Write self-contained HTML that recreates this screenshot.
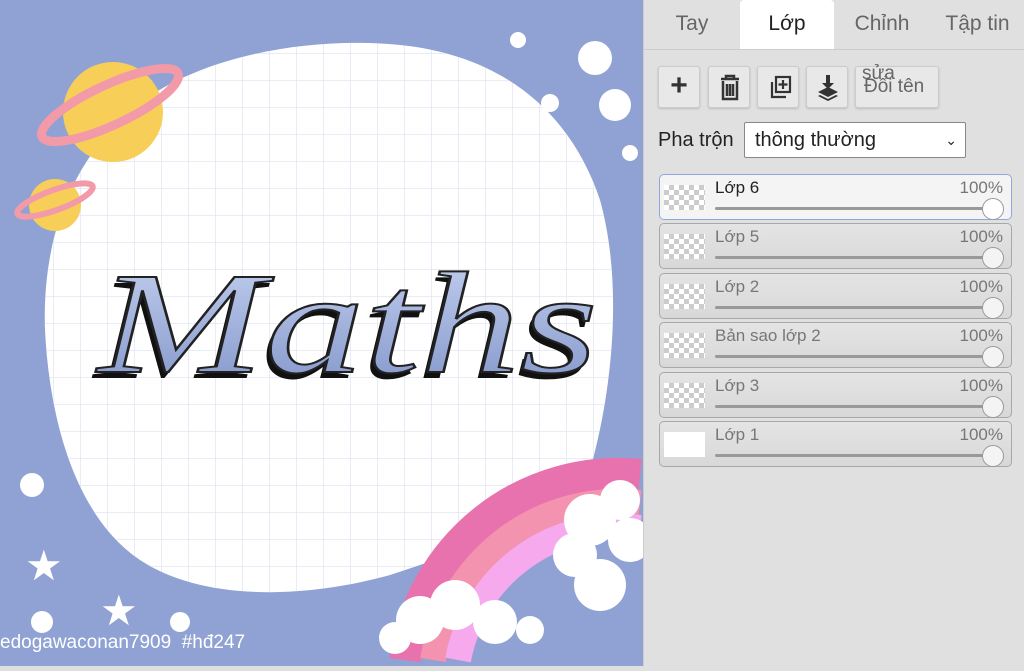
<!DOCTYPE html>
<html><head><meta charset="utf-8"><style>
*{margin:0;padding:0;box-sizing:border-box}
body{width:1024px;height:666px;overflow:hidden;background:#e0e0e0;font-family:"Liberation Sans",sans-serif;position:relative}
#cv{position:absolute;left:0;top:0;width:643px;height:666px;background:#8fa2d3}
#panel{position:absolute;left:643px;top:0;width:381px;height:666px;background:#e0e0e0;border-left:1px solid #ccc}
.tab{position:absolute;top:0;height:49px;line-height:48px;font-size:21px;color:#666;text-align:center}
.tabline{position:absolute;left:0;top:49px;width:381px;height:1px;background:#ccc}
.btn{position:absolute;top:66px;width:42px;height:42px;background:#e8e8e8;border:1px solid #ccc;border-radius:3px;box-shadow:0 1px 2px #bbb}
.layer{position:absolute;left:15px;width:353px;height:46px;border:1px solid #a8a8a8;border-radius:5px;background:linear-gradient(#e4e4e4,#d8d8d8)}
.layer .th{position:absolute;left:4px;top:10px;width:41px;height:25px;background-color:#fff;background-image:linear-gradient(45deg,#ccc 25%,transparent 25%,transparent 75%,#ccc 75%),linear-gradient(45deg,#ccc 25%,transparent 25%,transparent 75%,#ccc 75%);background-size:10px 10px;background-position:0 0,5px 5px}
.layer .nm{position:absolute;left:55px;top:3px;font-size:17px;color:#777}
.layer .pc{position:absolute;right:8px;top:3px;font-size:17px;color:#777}
.layer .tr{position:absolute;left:55px;right:18px;top:32px;height:3px;background:#999;border-radius:2px}
.layer .kn{position:absolute;right:7px;top:23px;width:22px;height:22px;border-radius:50%;background:#f4f4f4;border:1px solid #999}
</style></head><body>
<div id="cv">
<svg width="643" height="666" viewBox="0 0 643 666">
<defs>
<pattern id="g" width="27" height="27" patternUnits="userSpaceOnUse"><path d="M27 0V27H0" fill="none" stroke="#e3e6f2" stroke-width="1.5"/></pattern>
<linearGradient id="tg" x1="0" y1="0" x2="0" y2="1"><stop offset="0" stop-color="#c6d2f0"/><stop offset="1" stop-color="#7f93c8"/></linearGradient>
</defs>
<path d="M120 120 C180 60 300 35 400 45 C500 55 570 110 600 200 C625 290 610 400 590 470 C560 520 480 545 390 575 C300 600 200 600 140 560 C80 520 50 430 45 330 C42 240 70 170 120 120Z" fill="#fff"/>
<path d="M120 120 C180 60 300 35 400 45 C500 55 570 110 600 200 C625 290 610 400 590 470 C560 520 480 545 390 575 C300 600 200 600 140 560 C80 520 50 430 45 330 C42 240 70 170 120 120Z" fill="url(#g)"/>
<circle cx="113" cy="112" r="50" fill="#f7cf58"/>
<ellipse cx="110" cy="105" rx="75" ry="20" transform="rotate(-25 110 105)" fill="none" stroke="#f29aa8" stroke-width="9"/>
<circle cx="55" cy="205" r="26" fill="#f7cf58"/>
<ellipse cx="55" cy="200" rx="40" ry="10" transform="rotate(-20 55 200)" fill="none" stroke="#f29aa8" stroke-width="6"/>
<circle cx="518" cy="40" r="8" fill="#fff"/><circle cx="550" cy="103" r="9" fill="#fff"/><circle cx="630" cy="153" r="8" fill="#fff"/>
<circle cx="595" cy="58" r="17" fill="#fff"/><circle cx="615" cy="105" r="16" fill="#fff"/>
<circle cx="32" cy="485" r="12" fill="#fff"/><circle cx="42" cy="622" r="11" fill="#fff"/><circle cx="180" cy="622" r="10" fill="#fff"/>
<text x="25" y="580" font-size="42" fill="#fff">★</text><text x="100" y="625" font-size="42" fill="#fff">★</text>
<path d="M405 660 A215 215 0 0 1 640 475" fill="none" stroke="#e872ad" stroke-width="32"/>
<path d="M433 660 A188 188 0 0 1 640 503" fill="none" stroke="#f393b0" stroke-width="26"/>
<path d="M458 660 A163 163 0 0 1 640 528" fill="none" stroke="#f6a9ec" stroke-width="26"/>
<g fill="#fff"><circle cx="420" cy="620" r="24"/><circle cx="455" cy="605" r="25"/><circle cx="495" cy="622" r="22"/><circle cx="395" cy="638" r="16"/><circle cx="530" cy="630" r="14"/><circle cx="590" cy="520" r="26"/><circle cx="620" cy="500" r="20"/><circle cx="575" cy="555" r="22"/><circle cx="600" cy="585" r="26"/><circle cx="630" cy="540" r="22"/></g>
<text x="94" y="378" font-family="Liberation Serif" font-style="italic" font-size="145" fill="#111" textLength="500" lengthAdjust="spacingAndGlyphs">Maths</text>
<text x="98" y="372" font-family="Liberation Serif" font-style="italic" font-size="145" fill="url(#tg)" stroke="#222" stroke-width="2" textLength="500" lengthAdjust="spacingAndGlyphs">Maths</text>
<text x="0" y="648" font-size="19" fill="#fff">edogawaconan7909 &#160;#hđ247</text>
</svg>
</div>
<div id="panel">
<div class="tab" style="left:0;width:96px">Tay</div>
<div class="tab" style="left:96px;width:94px;background:#fff;color:#222;border-radius:4px 4px 0 0">Lớp</div>
<div class="tab" style="left:190px;width:96px">Chỉnh</div>
<div class="tab" style="left:286px;width:95px">Tập tin</div>
<div class="tabline"></div>
<div class="btn" style="left:14px;font-size:30px;line-height:38px;text-align:center;font-weight:bold;color:#333">+</div>
<div class="btn" style="left:64px"><svg width="42" height="42"><g fill="none" stroke="#333" stroke-width="2.5"><path d="M12 12H30M17 12V9H25V12M14 14V32H28V14M18 17V29M21 17V29M24 17V29"/></g></svg></div>
<div class="btn" style="left:113px"><svg width="42" height="42"><g fill="none" stroke="#333" stroke-width="2.2"><path d="M14 15V30H28"/><rect x="18" y="10" width="14" height="15"/><path d="M25 13V22M20.5 17.5H29.5"/></g></svg></div>
<div class="btn" style="left:162px"><svg width="42" height="42"><g fill="#333"><path d="M19 8H23V16H27L21 22L15 16H19Z"/><path d="M11 25L21 20L31 25L21 30Z"/><path d="M11 29L21 34L31 29L29 28L21 32L13 28Z"/></g></svg></div>
<div class="btn" style="left:211px;width:84px;font-size:19px;color:#666;text-align:center"><span style="position:absolute;left:6px;top:-4px">sửa</span><span style="position:absolute;left:8px;top:9px">Đổi tên</span></div>
<div style="position:absolute;left:14px;top:129px;font-size:20px;color:#222">Pha trộn</div>
<div style="position:absolute;left:100px;top:122px;width:222px;height:36px;background:#fff;border:1px solid #888;border-radius:2px;font-size:20px;line-height:34px;padding-left:10px;color:#222">thông thường<span style="position:absolute;right:8px;top:0;font-size:14px">&#x2304;</span></div>
<div class="layer" style="top:174px;background:#f4f4f4;border-color:#8fa8e0"><div class="th"></div><div class="nm" style="color:#222">Lớp 6</div><div class="pc">100%</div><div class="tr"></div><div class="kn" style="background:#fff"></div></div>
<div class="layer" style="top:223px"><div class="th"></div><div class="nm">Lớp 5</div><div class="pc">100%</div><div class="tr"></div><div class="kn"></div></div>
<div class="layer" style="top:273px"><div class="th"></div><div class="nm">Lớp 2</div><div class="pc">100%</div><div class="tr"></div><div class="kn"></div></div>
<div class="layer" style="top:322px"><div class="th"></div><div class="nm">Bản sao lớp 2</div><div class="pc">100%</div><div class="tr"></div><div class="kn"></div></div>
<div class="layer" style="top:372px"><div class="th"></div><div class="nm">Lớp 3</div><div class="pc">100%</div><div class="tr"></div><div class="kn"></div></div>
<div class="layer" style="top:421px"><div class="th" style="background:#fff"></div><div class="nm">Lớp 1</div><div class="pc">100%</div><div class="tr"></div><div class="kn"></div></div>
</div>
</body></html>
